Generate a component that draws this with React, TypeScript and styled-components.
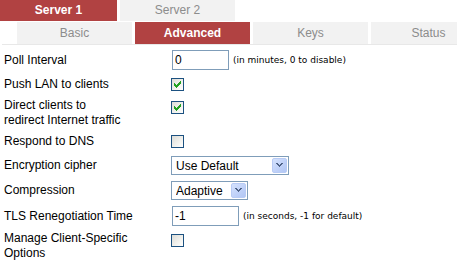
import React from 'react';
import styled, { createGlobalStyle } from 'styled-components';

const GlobalStyle = createGlobalStyle`
  html, body { margin: 0; padding: 0; background: #ffffff; overflow: hidden; }
  body {
    font-family: "Liberation Sans", Arial, sans-serif;
    font-size: 12px;
    color: #000000;
  }
`;

const Page = styled.div`
  width: 457px;
  overflow: hidden;
`;

const TabStrip = styled.div<{ $indent: number; $divider?: boolean }>`
  display: flex;
  gap: 3px;
  white-space: nowrap;
  padding-left: ${(p) => p.$indent}px;
  margin-bottom: 1px;
  ${(p) =>
    p.$divider
      ? `margin-left: 2px; padding-left: ${p.$indent - 2}px; border-bottom: 1px solid #e8e8e8; margin-bottom: 0;`
      : ''}
`;

const Tab = styled.div<{ $active?: boolean; $w?: number; $h: number }>`
  flex: none;
  width: ${(p) => p.$w ?? 115}px;
  height: ${(p) => p.$h}px;
  line-height: ${(p) => p.$h}px;
  text-align: center;
  font-size: 12px;
  background: ${(p) => (p.$active ? '#b14242' : '#f2f2f2')};
  color: ${(p) => (p.$active ? '#ffffff' : '#8c8c8c')};
  font-weight: ${(p) => (p.$active ? 'bold' : 'normal')};
  cursor: pointer;
`;

const Form = styled.div`
  padding-top: 2px;
`;

const Row = styled.div<{ $top?: boolean }>`
  display: flex;
  align-items: ${(p) => (p.$top ? 'flex-start' : 'center')};
  padding: 2px 0 2px 4px;
`;

const Label = styled.div`
  flex: none;
  width: 167px;
  line-height: 15px;
`;

const Field = styled.div`
  display: flex;
  align-items: center;
  gap: 4px;
`;

const TextInput = styled.input<{ $w: number }>`
  box-sizing: border-box;
  width: ${(p) => p.$w}px;
  height: 20px;
  margin: 1px 0 1px 1px;
  padding: 0 2px;
  border: 1px solid #7f9db9;
  background: #ffffff;
  font-family: "Liberation Sans", Arial, sans-serif;
  font-size: 12px;
  color: #000000;
  outline: none;
`;

const Hint = styled.span`
  font-family: "DejaVu Sans", Verdana, sans-serif;
  font-size: 9px;
  color: #000000;
  white-space: nowrap;
`;

const SelectWrap = styled.div<{ $w: number }>`
  box-sizing: border-box;
  display: flex;
  align-items: center;
  width: ${(p) => p.$w}px;
  height: 19px;
  margin: 1px 0;
  border: 1px solid #7f9db9;
  background: #ffffff;
`;

const NativeSelect = styled.select`
  flex: 1;
  min-width: 0;
  height: 17px;
  appearance: none;
  -webkit-appearance: none;
  border: none;
  outline: none;
  background: transparent;
  padding: 0 0 0 4px;
  margin: 0;
  font-family: "Liberation Sans", Arial, sans-serif;
  font-size: 12px;
  color: #000000;
`;

const DropButton = styled.span`
  box-sizing: border-box;
  flex: none;
  display: flex;
  align-items: center;
  justify-content: center;
  width: 15px;
  height: 15px;
  margin-right: 1px;
  border: 1px solid #b8cbf5;
  border-radius: 2px;
  background: linear-gradient(135deg, #d5e2fd 0%, #bed0f8 60%, #b1c6f4 100%);
`;

const CheckBox = styled.span<{ $top?: boolean }>`
  box-sizing: border-box;
  flex: none;
  display: flex;
  align-items: center;
  justify-content: center;
  width: 13px;
  height: 13px;
  margin: 3px 0;
  border: 1px solid #1c5180;
  background: linear-gradient(135deg, #dcdcd7 0%, #f2f2ee 60%, #ffffff 100%);
`;

const Check = () => (
  <svg width="7" height="7" viewBox="0 0 7 7" shapeRendering="crispEdges">
    <path
      fill="#21a121"
      d="M0 2h1v3h-1z M1 3h1v3h-1z M2 4h1v3h-1z M3 3h1v3h-1z M4 2h1v3h-1z M5 1h1v3h-1z M6 0h1v3h-1z"
    />
  </svg>
);

const Chevron = () => (
  <svg width="7" height="5" viewBox="0 0 7 5" shapeRendering="crispEdges">
    <path fill="#4d6185" d="M0 0h2v1h-2z M1 1h2v1h-2z M2 2h3v1h-3z M3 3h1v1h-1z M4 1h2v1h-2z M5 0h2v1h-2z M2 1h1v1h-1z M4 1h1v1h-1z" />
  </svg>
);

const Checkbox = ({ checked }: { checked?: boolean }) => (
  <CheckBox role="checkbox" aria-checked={!!checked}>
    {checked ? <Check /> : null}
  </CheckBox>
);

const Select = ({ w, value, options }: { w: number; value: string; options: string[] }) => (
  <SelectWrap $w={w}>
    <NativeSelect defaultValue={value}>
      {options.map((o) => (
        <option key={o}>{o}</option>
      ))}
    </NativeSelect>
    <DropButton>
      <Chevron />
    </DropButton>
  </SelectWrap>
);

export default function App() {
  return (
    <Page>
      <GlobalStyle />
      <TabStrip $indent={0}>
        <Tab $active $w={117} $h={21}>Server 1</Tab>
        <Tab $h={21}>Server 2</Tab>
      </TabStrip>
      <TabStrip $indent={17} $divider>
        <Tab $h={22}>Basic</Tab>
        <Tab $active $h={22}>Advanced</Tab>
        <Tab $h={22}>Keys</Tab>
        <Tab $h={22}>Status</Tab>
      </TabStrip>
      <Form>
        <Row>
          <Label>Poll Interval</Label>
          <Field>
            <TextInput $w={57} defaultValue="0" />
            <Hint>(in minutes, 0 to disable)</Hint>
          </Field>
        </Row>
        <Row>
          <Label>Push LAN to clients</Label>
          <Checkbox checked />
        </Row>
        <Row $top>
          <Label>
            Direct clients to
            <br />
            redirect Internet traffic
          </Label>
          <Checkbox checked />
        </Row>
        <Row>
          <Label>Respond to DNS</Label>
          <Checkbox />
        </Row>
        <Row>
          <Label>Encryption cipher</Label>
          <Select w={118} value="Use Default" options={['Use Default', 'Blowfish', 'AES-128', 'AES-256']} />
        </Row>
        <Row>
          <Label>Compression</Label>
          <Select w={77} value="Adaptive" options={['Disabled', 'None', 'Enabled', 'Adaptive']} />
        </Row>
        <Row>
          <Label>TLS Renegotiation Time</Label>
          <Field>
            <TextInput $w={67} defaultValue="-1" />
            <Hint>(in seconds, -1 for default)</Hint>
          </Field>
        </Row>
        <Row $top>
          <Label>
            Manage Client-Specific
            <br />
            Options
          </Label>
          <Checkbox />
        </Row>
      </Form>
    </Page>
  );
}
